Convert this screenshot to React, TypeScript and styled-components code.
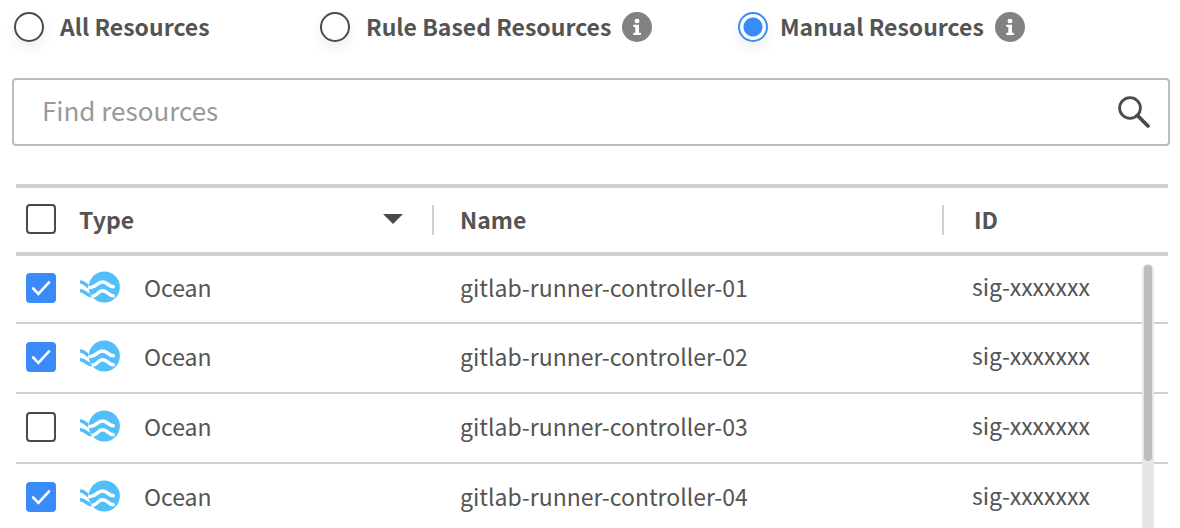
import React, { useState } from "react";
import styled, { createGlobalStyle } from "styled-components";

const GlobalStyle = createGlobalStyle`
  * { box-sizing: border-box; }
  body {
    margin: 0;
    background: #fff;
    color: #545454;
    font-family: "Noto Sans CJK JP", "Open Sans", sans-serif;
    font-size: 23px;
    line-height: 32px;
  }
  button, input { font: inherit; color: inherit; }
`;

const Page = styled.main`
  height: 100vh;
  overflow: hidden;
  display: flex;
  flex-direction: column;
  padding: 10px 10px 0 12px;
  & > * { flex: none; }
`;

const Filters = styled.div`
  display: grid;
  grid-template-columns: 306px 418px auto;
  padding: 0 2px;
`;

const Filter = styled.div`
  display: flex;
  align-items: center;
  gap: 11px;
  height: 34px;
`;

const FilterLabel = styled.label<{ $active: boolean }>`
  display: flex;
  align-items: center;
  gap: ${(p) => (p.$active ? 12 : 16)}px;
  font-weight: 700;
  white-space: nowrap;
`;

const FilterText = styled.span`
  padding-bottom: 2px;
`;

const Radio = styled.input`
  appearance: none;
  flex: none;
  width: 30px;
  height: 30px;
  margin: 0;
  border: 2px solid #4a4a4a;
  border-radius: 50%;
  background: #fff;
  box-shadow: 0 6px 14px rgba(0, 0, 0, 0.07);
  &:checked {
    border-color: #398bf9;
    background: radial-gradient(circle, #398bf9 9px, #fff 10px);
  }
`;

const InfoButton = styled.button`
  display: flex;
  padding: 0;
  border: 0;
  background: none;
`;

const SearchBox = styled.div`
  display: flex;
  align-items: center;
  height: 68px;
  margin-top: 34px;
  padding: 0 17px 0 28px;
  border: 2px solid #bdbdbd;
  border-radius: 4px;
`;

const SearchInput = styled.input`
  flex: 1;
  min-width: 0;
  padding: 0 0 4px;
  border: 0;
  outline: 0;
  background: none;
  font-size: 26px;
  &::placeholder { color: #999; opacity: 1; }
`;

const SearchButton = styled(InfoButton)``;

const TableArea = styled.section`
  position: relative;
  margin: 38px 2px 0 4px;
`;

const Table = styled.table`
  width: 100%;
  table-layout: fixed;
  border-collapse: separate;
  border-spacing: 0;
`;

const Col = styled.col<{ $width?: number }>`
  width: ${(p) => (p.$width ? `${p.$width}px` : "auto")};
`;

const HeadCell = styled.th<{ $lift?: number }>`
  height: 72px;
  padding: 0 0 ${(p) => p.$lift ?? 0}px;
  border-top: 4px solid #d0d0d0;
  border-bottom: 4px solid #d0d0d0;
  text-align: left;
  font-weight: 700;
`;

const HeadLabel = styled.div<{ $indent: number }>`
  display: flex;
  align-items: center;
  height: 30px;
  padding: 0 0 2px ${(p) => p.$indent}px;
  border-left: 2px solid #d0d0d0;
`;

const SortButton = styled.button`
  display: flex;
  align-items: center;
  justify-content: space-between;
  width: 100%;
  padding: 0 29px 0 1px;
  border: 0;
  background: none;
  font-weight: 700;
`;

const Cell = styled.td<{ $indent?: number; $lift: number }>`
  height: 70px;
  padding: 0 0 ${(p) => p.$lift}px ${(p) => p.$indent ?? 0}px;
  border-bottom: 2px solid #d0d0d0;
  white-space: nowrap;
  tbody tr:first-child & { height: 68px; }
`;

const TypeValue = styled.div`
  display: flex;
  align-items: center;
  gap: 24px;
`;

const CheckHolder = styled.span`
  display: grid;
  width: 30px;
  height: 30px;
  margin-left: 10px;
  & > * { grid-area: 1 / 1; }
  & > svg { pointer-events: none; }
`;

const CheckInput = styled.input`
  appearance: none;
  width: 30px;
  height: 30px;
  margin: 0;
  border: 2px solid #4a4a4a;
  border-radius: 4px;
  background: #fff;
  &:checked {
    border-color: #398bf9;
    background: #398bf9;
  }
`;

const ScrollTrack = styled.div`
  position: absolute;
  top: 80px;
  right: 14px;
  bottom: 0;
  width: 12px;
  padding: 1px 2px;
  border-radius: 6px 6px 0 0;
  background: #e6e6e6;
`;

const ScrollThumb = styled.div`
  height: 196px;
  border-radius: 4px;
  background: #bdbdbd;
`;

function InfoIcon() {
  return (
    <svg width="30" height="30" viewBox="0 0 30 30" aria-hidden="true">
      <circle cx="15" cy="15" r="15" fill="#828282" />
      <ellipse cx="15" cy="9" rx="2.5" ry="2.2" fill="#fff" />
      <path d="M11.3 12.7H17v8h1.9V23h-7.6v-2.3h2V15h-2z" fill="#fff" />
    </svg>
  );
}

function SearchIcon() {
  return (
    <svg width="34" height="34" viewBox="0 0 34 34" fill="none" stroke="#4a4a4a" aria-hidden="true">
      <circle cx="13" cy="13" r="10.4" strokeWidth="2.8" />
      <path d="M20.5 20.5L31 31" strokeWidth="3.8" strokeLinecap="round" />
    </svg>
  );
}

function OceanIcon() {
  return (
    <svg width="40" height="32" viewBox="0 0 40 32" fill="none" strokeLinecap="round" aria-hidden="true">
      <path
        d="M0 11C5.5 10.6 6 16 11 16.6M0 19.8C5.5 19.4 6 24.6 12.5 25"
        stroke="#53bffa"
        strokeWidth="3.6"
        strokeLinecap="butt"
      />
      <circle cx="24.3" cy="16" r="15.9" fill="#fff" />
      <circle cx="24.3" cy="16" r="15.6" fill="#53bffa" />
      <path
        d="M9.8 16.4C16 17 17 10.9 22.5 10.9C28 10.9 28 15.8 33.3 15.8M13.2 25C17.5 24.6 18 19.8 22.5 19.8C28 19.8 28 24.8 33.3 24.8"
        stroke="#fff"
        strokeWidth="3.5"
      />
    </svg>
  );
}

function Checkbox({ label, initial = false }: { label: string; initial?: boolean }) {
  const [checked, setChecked] = useState(initial);
  return (
    <CheckHolder>
      <CheckInput
        type="checkbox"
        aria-label={label}
        checked={checked}
        onChange={(e) => setChecked(e.target.checked)}
      />
      {checked && (
        <svg width="30" height="30" viewBox="0 0 30 30" fill="none" aria-hidden="true">
          <path d="M7.2 15.5L12.4 20.8L23 9.3" stroke="#fff" strokeWidth="2.6" strokeLinecap="round" />
        </svg>
      )}
    </CheckHolder>
  );
}

const filters = [
  { id: "all", label: "All Resources", info: false },
  { id: "rule", label: "Rule Based Resources", info: true },
  { id: "manual", label: "Manual Resources", info: true },
];

const resources = [
  { name: "gitlab-runner-controller-01", id: "sig-xxxxxxx", selected: true },
  { name: "gitlab-runner-controller-02", id: "sig-xxxxxxx", selected: true },
  { name: "gitlab-runner-controller-03", id: "sig-xxxxxxx", selected: false },
  { name: "gitlab-runner-controller-04", id: "sig-xxxxxxx", selected: true },
];

export default function App() {
  const [mode, setMode] = useState("manual");
  return (
    <>
      <GlobalStyle />
      <Page>
        <Filters role="radiogroup" aria-label="Resource selection">
          {filters.map((f) => (
            <Filter key={f.id}>
              <FilterLabel $active={mode === f.id}>
                <Radio type="radio" name="mode" checked={mode === f.id} onChange={() => setMode(f.id)} />
                <FilterText>{f.label}</FilterText>
              </FilterLabel>
              {f.info && (
                <InfoButton type="button" aria-label={`About ${f.label}`}>
                  <InfoIcon />
                </InfoButton>
              )}
            </Filter>
          ))}
        </Filters>
        <SearchBox>
          <SearchInput type="text" placeholder="Find resources" aria-label="Find resources" />
          <SearchButton type="button" aria-label="Search">
            <SearchIcon />
          </SearchButton>
        </SearchBox>
        <TableArea>
          <Table>
            <colgroup>
              <Col $width={62} />
              <Col $width={354} />
              <Col />
              <Col $width={226} />
            </colgroup>
            <thead>
              <tr>
                <HeadCell $lift={2}>
                  <Checkbox label="Select all" />
                </HeadCell>
                <HeadCell $lift={2}>
                  <SortButton type="button">
                    Type
                    <svg width="20" height="10" viewBox="0 0 20 10" aria-hidden="true">
                      <path d="M0 0H20L10 10Z" fill="#4a4a4a" />
                    </svg>
                  </SortButton>
                </HeadCell>
                <HeadCell>
                  <HeadLabel $indent={26}>Name</HeadLabel>
                </HeadCell>
                <HeadCell>
                  <HeadLabel $indent={30}>ID</HeadLabel>
                </HeadCell>
              </tr>
            </thead>
            <tbody>
              {resources.map((r) => (
                <tr key={r.name}>
                  <Cell $lift={2}>
                    <Checkbox label={`Select ${r.name}`} initial={r.selected} />
                  </Cell>
                  <Cell $lift={4} $indent={2}>
                    <TypeValue>
                      <OceanIcon />
                      Ocean
                    </TypeValue>
                  </Cell>
                  <Cell $lift={4} $indent={28}>{r.name}</Cell>
                  <Cell $lift={6} $indent={30}>{r.id}</Cell>
                </tr>
              ))}
            </tbody>
          </Table>
          <ScrollTrack>
            <ScrollThumb />
          </ScrollTrack>
        </TableArea>
      </Page>
    </>
  );
}
